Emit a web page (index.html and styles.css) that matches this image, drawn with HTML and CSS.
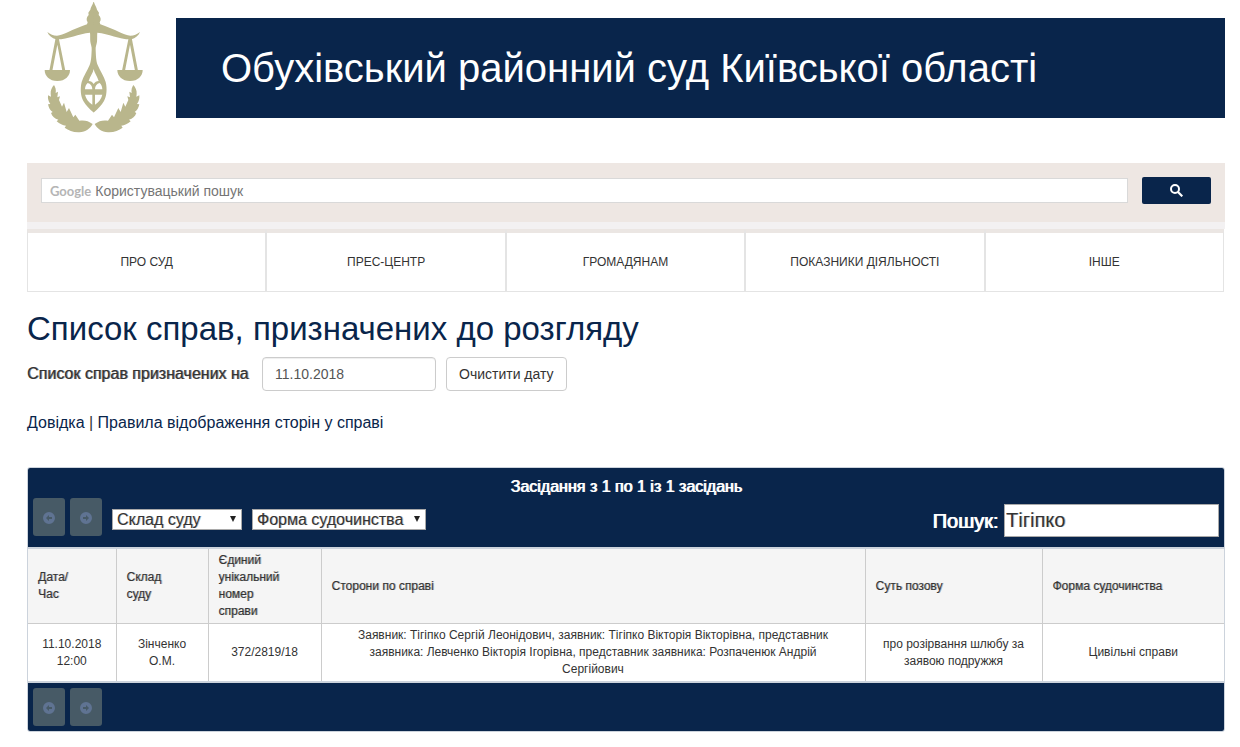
FILE: index.html
```html
<!DOCTYPE html>
<html lang="uk">
<head>
<meta charset="utf-8">
<title>Обухівський районний суд Київської області</title>
<link rel="stylesheet" href="styles.css">
</head>
<body>
<svg class="defs" aria-hidden="true">
  <symbol id="arrow-left" viewBox="0 0 12 12"><path fill-rule="evenodd" d="M6 0a6 6 0 1 1 0 12A6 6 0 0 1 6 0ZM6 3 3 6l3 3V7h3V5H6Z"/></symbol>
  <symbol id="arrow-right" viewBox="0 0 12 12"><path fill-rule="evenodd" d="M6 0a6 6 0 1 1 0 12A6 6 0 0 1 6 0ZM6 3l3 3-3 3V7H3V5h3Z"/></symbol>
  <symbol id="scale-side" viewBox="0 0 390 420">
    <path d="M192 7H190C187 17 182 22 181 29L175 38 176 45C169 52 168 60 173 67L171 73C153 80 131 88 113 97 101 102 91 106 81 107 70 107 61 103 52 96 56 106 66 115 78 118 113 119 145 101 180 98 181 106 180 116 181 125 182 133 186 140 185 150 184 170 184 182 179 195 172 213 160 228 155 246 150 267 152 288 160 303 168 317 178 326 190 337H192Z"/>
    <path d="M44 210h76c0 18-14 33-38 33s-38-15-38-33Z"/>
    <path d="M77 113h9l20 99h-9L82 134 67 212h-9Z"/>
    <path d="M72 255C66 262 61 271 62 282L63 290 54 286C53 296 55 304 61 312L54 313C56 323 60 331 68 336L63 339C67 350 74 356 85 359L80 364C89 372 98 376 108 377L104 383C116 391 130 398 148 397 168 395 180 386 188 372 174 362 164 360 148 362L136 344 130 352 117 324 110 336 102 308 96 320 87 300 90 289 82 292 84 275 77 279C79 269 76 262 72 255Z"/>
  </symbol>
</svg>
<div class="page">
  <header class="header">
    <a class="logo" href="#" aria-label="Судова влада України">
      <svg viewBox="0 0 390 420" width="130" height="140" aria-hidden="true">
        <g fill="#b9b68c">
          <use href="#scale-side" width="390" height="420"/>
          <use href="#scale-side" width="390" height="420" transform="translate(382 0) scale(-1 1)"/>
        </g>
        <path fill="#fff" d="M191 207C193 220 202 229 206 243 199 243 195 246 191 252 187 246 183 243 176 243 180 229 189 220 191 207ZM165 268C165 260 168 253 173 249 182 251 187 258 187 268ZM195 268C195 258 200 251 209 249 214 253 217 260 217 268ZM165 284H187V314C176 306 168 297 165 284ZM195 284H217C214 297 206 306 195 314Z"/>
      </svg>
    </a>
    <div class="banner">Обухівський районний суд Київської області</div>
  </header>

  <form class="site-search">
    <label class="site-search-box">
      <span class="brand">Google</span>
      <input class="site-search-input" type="text" placeholder="Користувацький пошук" aria-label="Користувацький пошук">
    </label>
    <button class="site-search-button" type="button" aria-label="Шукати">
      <svg viewBox="0 0 13 13" width="13" height="13" fill="none" stroke="#fff" aria-hidden="true"><circle cx="5" cy="5" r="4" stroke-width="2"/><path d="m8 8 4.300 4.300" stroke-width="2.200"/></svg>
    </button>
  </form>

  <nav class="menu">
    <a href="#">ПРО СУД</a>
    <a href="#">ПРЕС-ЦЕНТР</a>
    <a href="#">ГРОМАДЯНАМ</a>
    <a href="#">ПОКАЗНИКИ ДІЯЛЬНОСТІ</a>
    <a href="#">ІНШЕ</a>
  </nav>

  <main>
    <h1 class="title">Список справ, призначених до розгляду</h1>
    <div class="date-row">
      <label class="date-label" for="date">Список справ призначених на</label>
      <input class="date-input" id="date" type="text" value="11.10.2018">
      <button class="clear-button" type="button">Очистити дату</button>
    </div>
    <p class="links"><a href="#">Довідка</a> | <a href="#">Правила відображення сторін у справі</a></p>

    <section class="panel">
      <div class="panel-head">
        <div class="summary">Засідання з 1 по 1 із 1 засідань</div>
        <div class="toolbar">
          <div class="pager">
            <button type="button" disabled aria-label="Попередня"><svg width="12" height="12"><use href="#arrow-left"/></svg></button>
            <button type="button" disabled aria-label="Наступна"><svg width="12" height="12"><use href="#arrow-right"/></svg></button>
          </div>
          <div class="filters">
            <div class="select select-judge"><select aria-label="Склад суду"><option>Склад суду</option></select></div>
            <div class="select select-form"><select aria-label="Форма судочинства"><option>Форма судочинства</option></select></div>
          </div>
          <label class="find"><span>Пошук:</span><input type="text" value="Тігіпко"></label>
        </div>
      </div>
      <table class="cases">
        <colgroup><col class="col-date"><col class="col-judge"><col class="col-number"><col><col class="col-claim"><col class="col-form"></colgroup>
        <thead>
          <tr><th>Дата/<br>Час</th><th>Склад<br>суду</th><th>Єдиний<br>унікальний<br>номер<br>справи</th><th>Сторони по справі</th><th>Суть позову</th><th>Форма судочинства</th></tr>
        </thead>
        <tbody>
          <tr>
            <td>11.10.2018 12:00</td>
            <td>Зінченко О.М.</td>
            <td>372/2819/18</td>
            <td class="parties">Заявник: Тігіпко Сергій Леонідович, заявник: Тігіпко Вікторія Вікторівна, представник заявника: Левченко Вікторія Ігорівна, представник заявника: Розпаченюк Андрій Сергійович</td>
            <td>про розірвання шлюбу за заявою подружжя</td>
            <td>Цивільні справи</td>
          </tr>
        </tbody>
      </table>
      <div class="panel-foot">
        <div class="pager">
          <button type="button" disabled aria-label="Попередня"><svg width="12" height="12"><use href="#arrow-left"/></svg></button>
          <button type="button" disabled aria-label="Наступна"><svg width="12" height="12"><use href="#arrow-right"/></svg></button>
        </div>
      </div>
    </section>
  </main>
</div>
</body>
</html>
```
FILE: styles.css
```css
*, *::before, *::after { box-sizing: border-box; }
body {
  margin: 0;
  background: #fff;
  color: #333;
  font-family: "Liberation Sans", Arial, sans-serif;
  font-size: 16px;
  line-height: 24px;
}
input, select, button { font: inherit; color: inherit; margin: 0; }
a { color: #09254b; text-decoration: none; }
.defs { position: absolute; width: 0; height: 0; }
.page { padding: 0 15px 15px 27px; }

.header { display: flex; height: 163px; padding-left: 3px; }
.logo { flex: none; width: 146px; }
.logo svg { display: block; }
.banner {
  flex: 1;
  height: 100px;
  margin-top: 18px;
  padding: 0 45px;
  background: #09254b;
  color: #fff;
  font-size: 40px;
  line-height: 100px;
}

.site-search {
  display: flex;
  align-items: flex-start;
  gap: 14px;
  height: 59px;
  padding: 14px 14px 0;
  background: #eee7e3;
}
.site-search-box {
  flex: 1;
  display: flex;
  align-items: center;
  gap: 4px;
  height: 25px;
  margin-top: 1px;
  padding-left: 8px;
  border: 1px solid #d9d9d9;
  background: #fff;
}
.brand { color: #b5b5b5; font-family: Lato, sans-serif; font-size: 13px; font-weight: 700; }
.site-search-input { flex: 1; border: 0; padding: 0; outline: 0; font-size: 14px; background: transparent; }
.site-search-input::placeholder { color: #757575; opacity: 1; }
.site-search-button {
  display: grid;
  place-items: center;
  width: 69px;
  height: 27px;
  padding: 0;
  border: 0;
  border-radius: 2px;
  background: #09254b;
}

.menu {
  display: grid;
  grid-template-columns: repeat(5, 1fr);
  padding-right: 1px;
  border-top: 7px solid #f3f1f2;
}
.menu a {
  height: 63px;
  border: 1px solid #e4e4e4;
  border-top: 4px solid #ebe6e3;
  color: #333;
  font-size: 12px;
  line-height: 58px;
  text-align: center;
}

.title {
  margin: 18px 0 10px;
  color: #09254b;
  font-size: 33px;
  font-weight: 400;
  line-height: 37px;
}
.date-row { display: flex; align-items: center; }
.date-label { min-width: 226px; margin-right: 9px; text-shadow: 1px 0 rgba(51, 51, 51, .6); }
.date-input {
  width: 174px;
  height: 34px;
  margin-right: 10px;
  padding: 0 12px;
  border: 1px solid #ccc;
  border-radius: 4px;
  box-shadow: inset 0 1px 1px #eee;
  color: #555;
  font-size: 14px;
}
.clear-button {
  height: 34px;
  padding: 0 12px;
  border: 1px solid #ccc;
  border-radius: 4px;
  background: #fff;
  font-size: 14px;
}
.links { margin: 20px 0 32px; }

.panel { border: 1px solid #ccd3dc; border-radius: 3px; overflow: hidden; }
.panel-head { padding: 7px 5px 10px; background: #09254b; color: #fff; }
.summary { text-align: center; line-height: 23px; text-shadow: 1px 0 #fff; }
.toolbar { display: flex; align-items: flex-start; gap: 10px; }
.pager { display: flex; gap: 5px; }
.pager button {
  display: grid;
  place-items: center;
  width: 32px;
  height: 38px;
  padding: 2px 0 0;
  border: 0;
  border-radius: 3px;
  background: #475a66;
  color: #5f7392;
}
.pager svg { fill: currentColor; }
.filters { display: flex; flex: 1; gap: 10px; margin-top: 11px; }
.select { position: relative; }
.select::after {
  content: "";
  position: absolute;
  top: 7px;
  right: 6px;
  border: 3px solid transparent;
  border-top: 6px solid #222;
  border-bottom: 0;
  pointer-events: none;
}
.select select {
  appearance: none;
  display: block;
  width: 100%;
  height: 21px;
  padding: 0 4px;
  border: 1px solid #a9a9a9;
  border-radius: 0;
  background: #fff;
  color: #333;
  line-height: 19px;
  text-shadow: 1px 0 rgba(51, 51, 51, .3);
}
.select-judge { width: 130px; }
.select-form { width: 174px; }
.find { display: flex; align-items: center; gap: 6px; margin-top: 6px; font-size: 20px; }
.find span { text-shadow: 1px 0 #fff; }
.find input {
  width: 215px;
  height: 33px;
  padding: 0 1px;
  border: 1px solid #a9a9a9;
  background: #fff;
  color: #333;
  text-shadow: 1px 0 rgba(51, 51, 51, .3);
}

.cases {
  width: 100%;
  table-layout: fixed;
  border-collapse: collapse;
  border-top: 2px solid #ccd3dc;
  border-bottom: 2px solid #ccd3dc;
  font-size: 12px;
  line-height: 17px;
}
.col-date { width: 88px; }
.col-judge { width: 92px; }
.col-number { width: 113px; }
.col-claim { width: 177px; }
.col-form { width: 182px; }
.cases th, .cases td { vertical-align: middle; border-left: 1px solid #ccc; }
.cases th:first-child, .cases td:first-child { border-left: 0; }
.cases th {
  padding: 3px 10px;
  background: #f5f5f5;
  border-bottom: 1px solid #ccc;
  font-weight: 400;
  text-align: left;
  text-shadow: 1px 0 rgba(51, 51, 51, .4);
}
.cases td { padding: 3px 10px; text-align: center; }
.cases .parties { padding: 3px 24px; }
.panel-foot { padding: 5px; background: #09254b; }
```
